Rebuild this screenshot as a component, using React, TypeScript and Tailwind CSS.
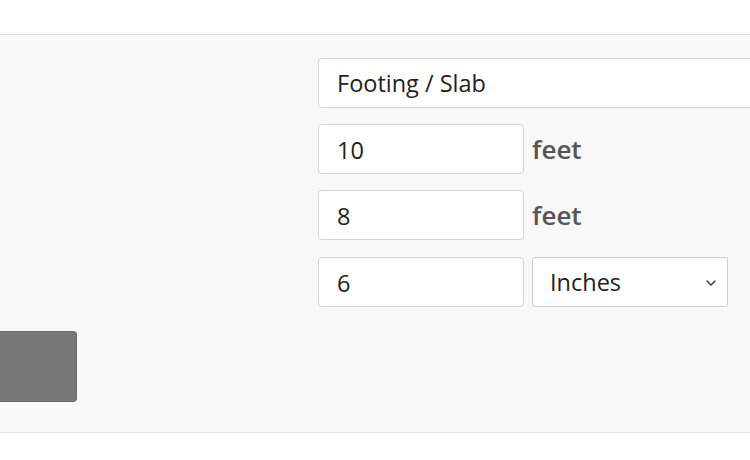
import { ChevronDown } from "lucide-react";

const inputClass =
  "h-[50px] w-[206px] rounded-[4px] border border-[#d4d4d4] bg-white px-[18px] pt-[2px] text-[23.5px] text-[#222] outline-none";

const App = () => {
  return (
    <div className="h-[460px] w-[750px] overflow-hidden bg-white font-['Open_Sans',sans-serif]">
      <div className="h-[34px]" />
      <div className="flex h-[399px] border-y border-t-[#dcdcdc] border-b-[#dde4ea] bg-[#f8f8f8]">
        {/* Left side: cut-off button */}
        <div className="w-[318px] shrink-0 pt-[296px]">
          <div className="h-[71px] w-[77px] rounded-r-[4px] border border-l-0 border-[#6a6a6a] bg-[#777]" />
        </div>

        {/* Right side: form */}
        <div className="flex flex-col gap-4 pt-[23px]">
          <div className="flex h-[50px] w-[460px] items-center rounded-[4px] border border-[#d4d4d4] bg-white px-[18px] pt-[2px] text-[23.5px] text-[#222]">
            Footing / Slab
          </div>
          <div className="flex items-center gap-2">
            <input className={inputClass} defaultValue="10" />
            <span className="text-[26px] font-semibold text-[#555]">feet</span>
          </div>
          <div className="flex items-center gap-2">
            <input className={inputClass} defaultValue="8" />
            <span className="text-[26px] font-semibold text-[#555]">feet</span>
          </div>
          <div className="flex items-center gap-2 pt-px">
            <input className={inputClass} defaultValue="6" />
            <div className="flex h-[50px] w-[196px] items-center justify-between rounded-[3px] border border-[#cfcfcf] bg-white pt-[2px] pl-[17px] pr-[8px] text-[23.5px] text-[#222]">
              <span>Inches</span>
              <ChevronDown size={16} strokeWidth={2} className="text-[#333]" />
            </div>
          </div>
        </div>
      </div>
    </div>
  );
};

export default App;
